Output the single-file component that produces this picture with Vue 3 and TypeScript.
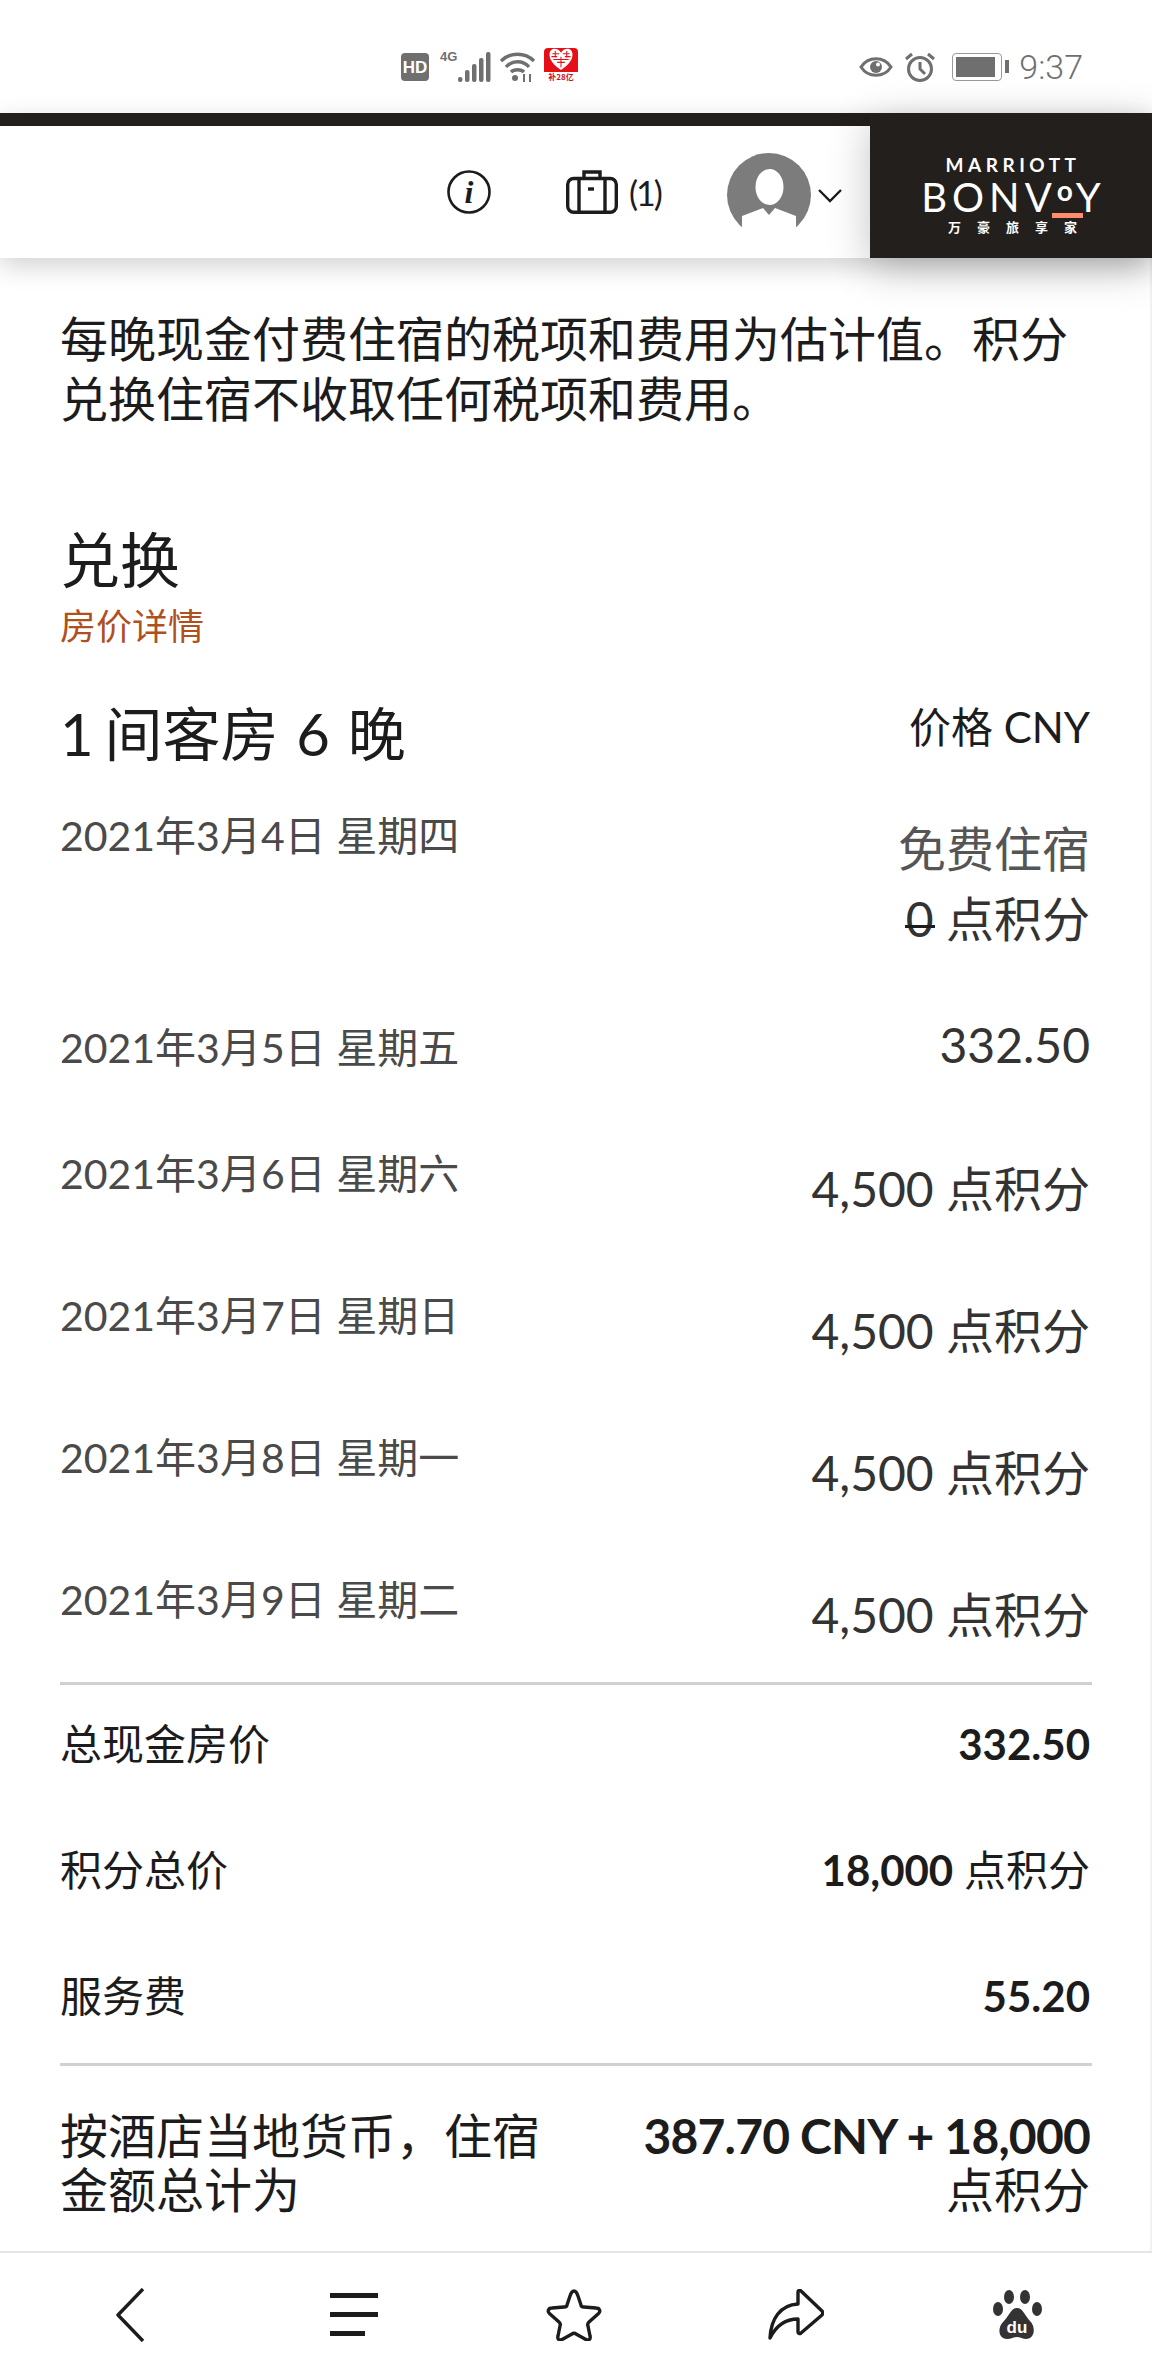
<template>
  <div class="page">
    <div class="status">
      <div class="status-mid">
        <svg width="28" height="30" viewBox="0 0 28 30"><rect y="1" width="28" height="28" rx="4" fill="#6f6f6f" /><text x="14" y="21" text-anchor="middle" class="hd">HD</text></svg>
        <div class="net">
          <span class="g4">4G</span>
          <svg width="33" height="30" viewBox="0 0 33 30" fill="#6f6f6f"><rect x="0" y="25" width="4.5" height="5" rx="2" /><rect x="7" y="18" width="4.5" height="12" rx="2" /><rect x="14" y="12" width="4.5" height="18" rx="2" /><rect x="21" y="6" width="4.5" height="24" rx="2" /><rect x="28" y="0" width="4.5" height="30" rx="2" /></svg>
        </div>
        <svg width="37" height="30" viewBox="0 0 37 30" fill="none" stroke="#6f6f6f" stroke-width="3.4"><path d="M2 9C11 0 26 0 35 9" /><path d="M7 15C13 8 24 8 30 15" /><path d="M12 20c3-3 10-3 13 0" /><circle cx="16" cy="26" r="3" fill="#6f6f6f" stroke="none" /><path d="M25 30v-8M31 22v8" stroke-width="2" /></svg>
        <div class="app-icon">
          <div class="app-top">
            <svg width="26" height="23" viewBox="0 0 26 24"><path d="M13 23C6 18 1 13 1 7c0-8 9-8 12-2 3-6 12-6 12 2 0 6-5 11-12 16z" fill="#fff" /><path d="M4 6h7M15 6h7M7 3v7M19 3v7M5 12h16M9 15h8M13 9v11M3 9h6M17 9h6" stroke="#e60f18" stroke-width="1.1" fill="none" /></svg>
          </div>
          <span class="app-label">补28亿</span>
        </div>
      </div>
      <div class="status-right">
        <svg width="34" height="26" viewBox="0 0 34 26" fill="none" stroke="#6f6f6f" stroke-width="3"><path d="M2 13C9 2 25 2 32 13 25 24 9 24 2 13z" /><circle cx="17" cy="13" r="6" fill="#6f6f6f" stroke="none" /><circle cx="19" cy="10.5" r="2" fill="#fff" stroke="none" /></svg>
        <svg width="32" height="30" viewBox="0 0 32 30" fill="none" stroke="#6f6f6f" stroke-width="3"><circle cx="16" cy="17" r="11.5" /><path d="M16 10v7l5 5M2 7l6-5M30 7l-6-5" /></svg>
        <div class="battery"><div class="battery-fill"></div></div>
        <span class="clock">9:37</span>
      </div>
    </div>

    <header class="head">
      <div class="head-bar">
        <svg class="ic-info" width="44" height="44" viewBox="0 0 44 44" fill="none"><circle cx="22" cy="22" r="20.5" stroke="#1c1c1c" stroke-width="2.6" /><text x="22" y="33" text-anchor="middle" class="info-i">i</text></svg>
        <svg class="ic-bag" width="52" height="44" viewBox="0 0 52 44" fill="none" stroke="#1c1c1c" stroke-width="3.4"><rect x="1.7" y="8.5" width="48.6" height="33.8" rx="6" /><path d="M18 8V2h16v6M13 9v33M39 9v33" /><path d="M22 19h6" /></svg>
        <span class="bag-count">(1)</span>
        <svg class="ic-user" width="84" height="75" viewBox="0 0 84 75">
          <circle cx="42" cy="42" r="42" fill="#7c7c7c" />
          <ellipse cx="42.5" cy="34" rx="14" ry="18" fill="#fff" />
          <path d="M15 76V63l21-8 6 7 6-7 21 8v13z" fill="#fff" />
        </svg>
        <svg class="ic-chev" width="24" height="14" viewBox="0 0 24 14" fill="none" stroke="#1c1c1c" stroke-width="2.4"><path d="M1 1l11 11L23 1" /></svg>
      </div>
      <div class="logo">
        <span class="logo-top">MARRIOTT</span>
        <span class="logo-main">BONV<span class="logo-o">o</span>Y</span>
        <span class="logo-bar"></span>
        <span class="logo-cn">万豪旅享家</span>
      </div>
    </header>

    <main class="content">
      <p class="notice">每晚现金付费住宿的税项和费用为估计值。积分兑换住宿不收取任何税项和费用。</p>
      <h2 class="title">兑换</h2>
      <div class="subtitle">房价详情</div>
      <div class="rooms">
        <span class="rooms-name"><span class="rooms-one">1 </span>间客房 6 晚</span>
        <span class="rooms-cur">价格 CNY</span>
      </div>
      <div class="free">
        <span class="date">2021年3月4日 星期四</span>
        <div class="free-val">
          <div class="free-label">免费住宿</div>
          <div class="free-pts"><span class="struck">0</span> 点积分</div>
        </div>
      </div>
      <div class="cash">
        <span class="date">2021年3月5日 星期五</span>
        <span class="amount cash-amount">332.50</span>
      </div>
      <div v-for="n in nights" :key="n" class="night">
        <span class="date">{{ n }}</span>
        <span class="amount pts">4,500 点积分</span>
      </div>

      <div class="summary">
        <div v-for="s in summary" :key="s.label" class="sum-row">
          <span>{{ s.label }}</span>
          <span><b>{{ s.value }}</b>{{ s.unit }}</span>
        </div>
      </div>

      <div class="total">
        <span class="total-label">按酒店当地货币，住宿金额总计为</span>
        <span class="total-val"><b>387.70 CNY + 18,000</b> 点积分</span>
      </div>
    </main>

    <nav class="nav">
      <svg width="30" height="54" viewBox="0 0 30 54" fill="none" stroke="#1c1c1c" stroke-width="3.4" stroke-linejoin="round"><path d="M28 1L3 27l25 26" /></svg>
      <svg class="ic-menu" width="48" height="44" viewBox="0 0 48 44" fill="#1c1c1c"><rect width="48" height="5" /><rect y="19" width="48" height="5" /><rect y="38" width="35" height="5" /></svg>
      <svg width="56" height="52" viewBox="0 0 56 52" fill="none" stroke="#1c1c1c" stroke-width="3.4" stroke-linejoin="round"><path d="M28 2c2 0 3 2 4 5l3 9c0 1 1 2 3 2l12 1c4 0 5 4 2 6l-9 8c-1 1-2 2-1 4l2 10c1 4-2 5-5 3l-9-5c-1-1-3-1-4 0l-9 5c-3 2-6 1-5-3l2-10c1-2 0-3-1-4l-9-8c-3-2-2-6 2-6l12-1c2 0 3-1 3-2l3-9c1-3 2-5 4-5z" /></svg>
      <svg width="56" height="52" viewBox="0 0 56 52" fill="none" stroke="#1c1c1c" stroke-width="3.4" stroke-linejoin="round"><path d="M30 3v12C12 16 3 30 2 49c6-12 15-19 28-19v13c0 2 2 2 3 1l21-18c1-1 1-3 0-4L33 2c-1-1-3-1-3 1z" /></svg>
      <svg width="50" height="50" viewBox="0 0 50 50">
        <ellipse cx="16" cy="7" rx="5" ry="7" fill="#333" /><ellipse cx="32" cy="7" rx="5" ry="7" fill="#333" /><ellipse cx="5" cy="19" rx="5" ry="7" fill="#333" /><ellipse cx="44" cy="19" rx="5" ry="7" fill="#333" />
        <path d="M24 18c6 0 8 8 13 13 6 6 5 18-4 18-3 0-6-2-9-2s-6 2-10 2c-9 0-10-12-3-18 5-5 7-13 13-13z" fill="#333" />
        <text x="24" y="43" text-anchor="middle" class="du">du</text>
      </svg>
    </nav>
  </div>
</template>

<script setup lang="ts">
const nights: string[] = [
  '2021年3月6日 星期六',
  '2021年3月7日 星期日',
  '2021年3月8日 星期一',
  '2021年3月9日 星期二'
]

const summary = [
  { label: '总现金房价', value: '332.50', unit: '' },
  { label: '积分总价', value: '18,000', unit: ' 点积分' },
  { label: '服务费', value: '55.20', unit: '' }
]
</script>

<style>
html, body {
  margin: 0;
  background: #fff;
}
</style>

<style scoped>
.page {
  width: 1152px;
  height: 2376px;
  display: flex;
  flex-direction: column;
  overflow: hidden;
  background: #fff;
  color: #1c1c1c;
  font-family: Lato, "Noto Sans CJK SC", sans-serif;
}

.status {
  height: 113px;
  flex: none;
  display: flex;
  align-items: center;
  justify-content: space-between;
  box-sizing: border-box;
  padding: 20px 69px 0 401px;
}
.status-mid, .status-right {
  display: flex;
  align-items: center;
}
.status-mid {
  gap: 8px;
}
.status-right {
  gap: 11px;
}
.hd {
  font: 700 17px "Liberation Sans", sans-serif;
  fill: #fff;
}
.net {
  position: relative;
  display: flex;
  margin-left: 3px;
  padding-left: 18px;
}
.g4 {
  position: absolute;
  left: 0;
  top: -3px;
  font: 700 13px "Liberation Sans", sans-serif;
  color: #6f6f6f;
}
.app-icon {
  width: 34px;
  height: 33px;
  border-radius: 4px;
  overflow: hidden;
  background: #fff;
  display: flex;
  flex-direction: column;
  align-items: center;
  margin-top: -4px;
}
.app-top {
  width: 100%;
  height: 24px;
  background: #e60f18;
  display: flex;
  justify-content: center;
}
.app-label {
  font: 700 8px "Noto Sans CJK SC", sans-serif;
  line-height: 9px;
  color: #d0101a;
}
.battery {
  width: 50px;
  height: 28px;
  margin-left: 5px;
  box-sizing: border-box;
  border: 1.5px solid #9a9a9a;
  border-radius: 4px;
  padding: 3px;
  position: relative;
}
.battery::after {
  content: "";
  position: absolute;
  right: -8px;
  top: 6px;
  width: 4px;
  height: 13px;
  background: #6f6f6f;
}
.battery-fill {
  height: 100%;
  width: 92%;
  background: #6f6f6f;
}
.clock {
  margin-left: 6px;
  font: 300 34px Roboto, sans-serif;
  color: #6f6f6f;
}

.head {
  height: 145px;
  flex: none;
  display: flex;
  background: #231f1c;
  box-shadow: 0 8px 24px rgba(0, 0, 0, 0.18);
  position: relative;
}
.head-bar {
  margin-top: 13px;
  flex: 1;
  background: #fff;
  display: flex;
  align-items: center;
  box-sizing: border-box;
  padding-left: 447px;
}
.ic-bag {
  margin-left: 75px;
}
.bag-count {
  margin-left: 11px;
  font-size: 34px;
  width: 36px;
  letter-spacing: -2px;
}
.ic-user {
  margin-left: 62px;
  margin-top: -4px;
}
.ic-chev {
  margin-left: 7px;
  margin-top: 8px;
}
.info-i {
  font: italic 700 32px "Liberation Serif", serif;
  fill: #1c1c1c;
}
.logo {
  width: 282px;
  flex: none;
  display: flex;
  flex-direction: column;
  align-items: center;
  color: #fff;
  padding-top: 42px;
  box-sizing: border-box;
  background: #231f1c;
  position: relative;
  box-shadow: 0 10px 40px rgba(0, 0, 0, 0.24);
}
.logo-top {
  font-size: 19px;
  font-weight: 700;
  line-height: 20px;
  letter-spacing: 4.5px;
  margin-left: 4px;
}
.logo-main {
  font-size: 40px;
  line-height: 30px;
  margin-top: 7px;
  margin-left: 5px;
  letter-spacing: 5px;
}
.logo-o {
  font-size: 28px;
  line-height: 0;
  vertical-align: 11px;
  font-weight: 700;
  letter-spacing: 3px;
}
.logo-bar {
  width: 31px;
  height: 5px;
  background: #ff8d6b;
  margin-top: 1px;
  margin-left: 113px;
}
.logo-cn {
  font-size: 13px;
  line-height: 14px;
  letter-spacing: 16px;
  margin-left: 19px;
  margin-top: 2px;
  font-weight: 700;
}

.content {
  flex: 1;
  padding: 0 58px 0 60px;
  min-height: 0;
  border-right: 2px solid #f2f2f2;
}
.notice {
  margin: 51px 0 0;
  font-size: 48px;
  line-height: 60px;
}
.title {
  margin: 95px 0 0;
  font-size: 60px;
  line-height: 72px;
  font-weight: 400;
}
.subtitle {
  margin-top: 7px;
  font-size: 36px;
  line-height: 46px;
  color: #b0501f;
}
.rooms {
  margin-top: 50px;
  display: flex;
  justify-content: space-between;
  padding-right: 2px;
}
.rooms-name {
  font-size: 58px;
  line-height: 70px;
  word-spacing: 3px;
}
.rooms-one {
  word-spacing: -4px;
}
.rooms-cur {
  font-size: 42px;
  line-height: 50px;
  padding-top: 3px;
}
.date {
  font-size: 41px;
  line-height: 50px;
  color: #4a4a4a;
}
.free {
  margin-top: 42px;
  height: 212px;
  display: flex;
  justify-content: space-between;
  padding-right: 2px;
}
.free-val {
  margin-top: 3px;
  text-align: right;
  font-size: 48px;
  line-height: 70px;
  color: #333;
}
.free-label {
  color: #555;
}
.struck {
  position: relative;
  display: inline-block;
}
.struck::after {
  content: "";
  position: absolute;
  left: -1px;
  right: -1px;
  top: 58%;
  height: 3px;
  background: #1c1c1c;
}
.cash, .night {
  display: flex;
  justify-content: space-between;
  padding-right: 2px;
}
.cash {
  height: 126px;
}
.night {
  height: 142px;
}
.amount {
  font-size: 48px;
  line-height: 50px;
  color: #333;
}
.cash-amount {
  margin-top: -3px;
}
.pts {
  margin-top: 15px;
}
.summary {
  border-top: 3px solid #d0d0d0;
  border-bottom: 3px solid #d0d0d0;
  margin-top: -35px;
  padding: 34px 2px 42px 0;
  display: flex;
  flex-direction: column;
  gap: 76px;
  font-size: 42px;
  line-height: 50px;
}
.sum-row {
  display: flex;
  justify-content: space-between;
}
.sum-row b {
  font-weight: 700;
}
.total {
  margin-top: 43px;
  display: grid;
  grid-template-columns: 490px 450px;
  justify-content: space-between;
  padding-right: 2px;
  font-size: 48px;
  line-height: 54px;
}
.total-val {
  text-align: right;
}
.total-val b {
  letter-spacing: -0.8px;
}

.nav {
  height: 125px;
  flex: none;
  box-sizing: border-box;
  border-top: 2px solid #e5e5e5;
  background: #fff;
  display: grid;
  grid-template-columns: repeat(5, 222px);
  align-items: center;
  justify-items: center;
  padding-left: 19px;
}
.ic-menu {
  margin-left: 3px;
}
.du {
  font: 700 17px "Liberation Sans", sans-serif;
  fill: #fff;
}
</style>
